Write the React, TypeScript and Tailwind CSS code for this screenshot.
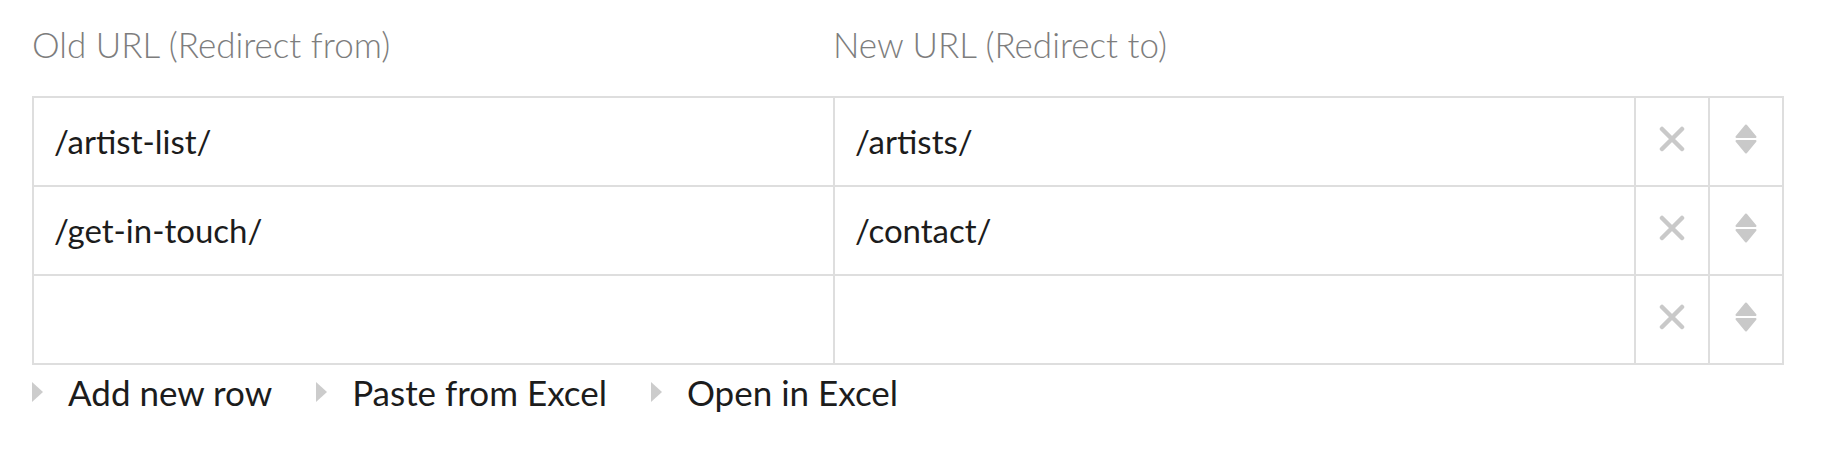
import React from "react"

const rows = [
  { from: "/artist-list/", to: "/artists/" },
  { from: "/get-in-touch/", to: "/contact/" },
  { from: "", to: "" },
]

const links = ["Add new row", "Paste from Excel", "Open in Excel"]

function RemoveIcon() {
  return (
    <svg width="26" height="26" viewBox="0 0 26 26" fill="none">
      <path d="M3 3L23 23M23 3L3 23" stroke="#c9c9c9" strokeWidth="4.5" strokeLinecap="round" />
    </svg>
  )
}

function SortIcon() {
  return (
    <svg width="22" height="30" viewBox="0 0 22 30">
      <path d="M11 1.5L20.5 13H1.5Z" fill="#c9c9c9" stroke="#c9c9c9" strokeWidth="2" strokeLinejoin="round" />
      <path d="M1.5 17H20.5L11 28.5Z" fill="#c9c9c9" stroke="#c9c9c9" strokeWidth="2" strokeLinejoin="round" />
    </svg>
  )
}

function Caret() {
  return (
    <svg width="11" height="20" viewBox="0 0 11 20">
      <path d="M0 0L11 10L0 20Z" fill="#cccccc" />
    </svg>
  )
}

export default function App() {
  return (
    <div className="min-h-[464px] w-full bg-white pl-[32px] font-['Lato',sans-serif]">
      <div className="w-[1752px]">
        <div className="grid h-[96px] grid-cols-[801px_1fr] pt-[23px] text-[35px] font-light leading-[1.2] text-[#7d7d7d]">
          <div>Old URL (Redirect from)</div>
          <div>New URL (Redirect to)</div>
        </div>

        <div className="border-l-2 border-t-2 border-[#dedede]">
          {rows.map((row, i) => (
            <div key={i} className="grid h-[89px] grid-cols-[801px_801px_74px_74px]">
              <div className="flex items-center border-b-2 border-r-2 border-[#dedede] pl-[20px] text-[33px] text-[#1c1c1c]">
                {row.from}
              </div>
              <div className="flex items-center border-b-2 border-r-2 border-[#dedede] pl-[20px] text-[33px] text-[#1c1c1c]">
                {row.to}
              </div>
              <div className="flex items-center justify-center border-b-2 border-r-2 border-[#dedede] pb-[5px]">
                <RemoveIcon />
              </div>
              <div className="flex items-center justify-center border-b-2 border-r-2 border-[#dedede] pb-[6px]">
                <SortIcon />
              </div>
            </div>
          ))}
        </div>

        <div className="mt-[6px] flex items-center gap-[44px] text-[35px] leading-[1.2] text-[#1c1c1c]">
          {links.map((label) => (
            <div key={label} className="flex items-center gap-[25px]">
              <Caret />
              <span>{label}</span>
            </div>
          ))}
        </div>
      </div>
    </div>
  )
}
